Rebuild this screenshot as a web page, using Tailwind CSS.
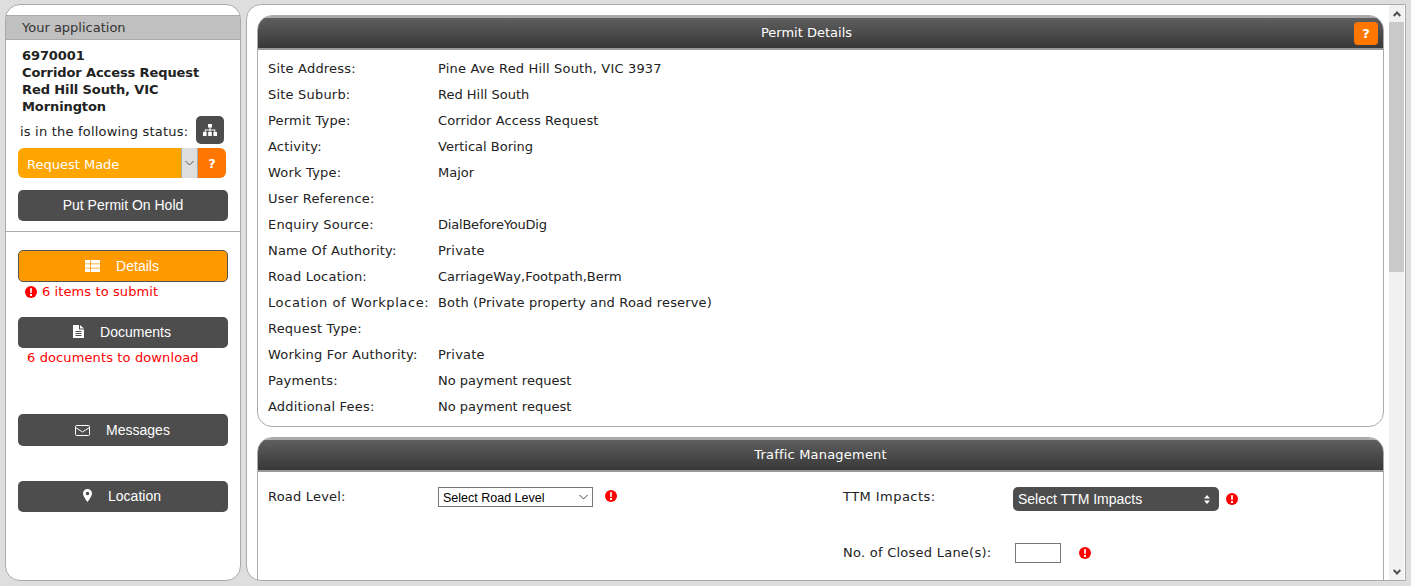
<!DOCTYPE html><html lang="en"><head>
<meta charset="UTF-8">
<title>Permit Details</title>
<meta name="viewport" content="width=device-width,initial-scale=1">
<script src="https://cdn.jsdelivr.net/npm/@tailwindcss/browser@4"></script>
</head><body class="h-screen overflow-hidden bg-[#dedede] font-['DejaVu_Sans',Verdana,sans-serif] text-[13px] text-[#222]">
<div class="flex h-[586px] gap-[5px] pt-1 pr-[5px] pb-[5px] pl-[5px]">

  <!-- sidebar -->
  <aside class="w-[236px] h-[577px] shrink-0 bg-white border border-[#aaa] rounded-[15px] pt-[10px]">
    <div class="h-[25px] bg-[#c0c0c0] border-y border-[#aaa] pl-4 leading-[23px] text-[#333]">Your application</div>
    <div class="pl-4 pt-[7px] font-bold leading-[17px] text-[#222] tracking-[-0.1px]">
      <p>6970001</p>
      <p>Corridor Access Request</p>
      <p>Red Hill South, VIC</p>
      <p>Mornington</p>
    </div>
    <div class="flex items-center h-[28px] mt-[1px] pl-[14px]">
      <span class="w-[176px] pt-1 tracking-[0.2px]">is in the following status:</span>
      <button class="w-[28px] h-[28px] bg-[#4d4d4d] rounded-[5px] flex items-center justify-center">
        <svg class="w-[14px] h-[12px]" viewBox="0 0 14 12" fill="#fff"><path d="M5 0h4v3.5H5zM0 8h3.6v4H0zM5.2 8h3.6v4H5.2zM10.4 8H14v4h-3.600zM6.500 3.500h1V5.500h4.800V8h-1V6.500h-3.800V8h-1V6.500H2.700V8h-1V5.500h4.800z"/></svg>
      </button>
    </div>
    <div class="flex h-[30px] mt-1 ml-3 w-[208px] rounded-[6px] overflow-hidden">
      <div class="w-[163px] bg-[#ffa500] text-white pl-[9px] leading-[34px]">Request Made</div>
      <div class="w-[17px] bg-[#dedede] border-x border-[#aaa] flex items-center justify-center">
        <svg class="w-[9px] h-[6px]" viewBox="0 0 9 6" fill="none" stroke="#555"><path d="M.5 1l4 4 4-4"/></svg>
      </div>
      <div class="w-[28px] bg-[#ff7700] text-white font-bold text-center leading-[32px]">?</div>
    </div>
    <button class="block w-[210px] h-[31px] mt-3 ml-3 pb-[2px] bg-[#4d4d4d] rounded-[5px] text-white font-['Liberation_Sans',Arial,sans-serif] text-sm">Put Permit On Hold</button>
    <div class="border-t border-[#aaa] mt-[10px]"></div>

    <button class="flex items-center justify-center w-[210px] h-[32px] mt-[18px] ml-3 pr-[2px] bg-[#ff9900] border border-[#555] rounded-[5px] text-white font-['Liberation_Sans',Arial,sans-serif] text-sm">
      <svg class="w-[15px] h-[12px] mr-[16px]" viewBox="0 0 15 12" fill="#fff"><path d="M0 0h5v3.400H0zM5.800 0H15v3.400H5.800zM0 4.300h5v3.400H0zM5.800 4.300H15v3.400H5.800zM0 8.600h5V12H0zM5.800 8.600H15V12H5.800z"/></svg>
      Details
    </button>
    <div class="flex items-center h-[18px] pt-[2px] ml-[19px] text-[#f00] tracking-[0.1px]">
      <svg class="w-[12px] h-[12px] mr-[5px]" viewBox="0 0 12 12"><circle cx="6" cy="6" r="6" fill="#f00"/><path d="M5 2.200h2l-.3 4.800H5.300zM5 8h2v2H5z" fill="#fff"/></svg>
      6 items to submit
    </div>

    <button class="flex items-center justify-center w-[210px] h-[31px] mt-[17px] ml-3 pr-[2px] pb-[2px] bg-[#4d4d4d] rounded-[5px] text-white font-['Liberation_Sans',Arial,sans-serif] text-sm">
      <svg class="w-[11px] h-[13px] mr-[16px]" viewBox="0 0 11 13" fill="#fff"><path d="M0 0h6v4.500h5V13H0zM7 0l4 3.500H7z"/><path d="M2.500 6.500h6M2.500 8.500h6M2.500 10.500h6" stroke="#4d4d4d"/></svg>
      Documents
    </button>
    <div class="h-[18px] ml-[21px] leading-[20px] text-[#f00] tracking-[0.12px]">6 documents to download</div>

    <button class="flex items-center justify-center w-[210px] h-[32px] mt-[48px] ml-3 pr-px bg-[#4d4d4d] rounded-[5px] text-white font-['Liberation_Sans',Arial,sans-serif] text-sm">
      <svg class="w-[15px] h-[11px] mr-[16px]" viewBox="0 0 15 11" fill="none" stroke="#fff"><rect x=".5" y=".5" width="14" height="10" rx="1"/><path d="M.5 2.500l7 4.500 7-4.500"/></svg>
      Messages
    </button>

    <button class="flex items-center justify-center w-[210px] h-[31px] mt-[35px] ml-3 pr-[2px] pb-[2px] bg-[#4d4d4d] rounded-[5px] text-white font-['Liberation_Sans',Arial,sans-serif] text-sm">
      <svg class="w-[9px] h-[13px] mr-[16px]" viewBox="0 0 9 13"><path fill="#fff" fill-rule="evenodd" d="M4.500 0A4.500 4.500 0 0 1 9 4.500c0 2-2.500 6-4.500 8.500C2.500 10.500 0 6.500 0 4.500A4.500 4.500 0 0 1 4.500 0zm0 2.700a1.800 1.800 0 1 0 0 3.600 1.800 1.800 0 0 0 0-3.600z"/></svg>
      Location
    </button>
  </aside>

  <!-- main -->
  <main class="relative flex-1 h-[577px] bg-white border border-[#aaa] rounded-l-[15px] overflow-hidden flex">
    <div class="flex-1 min-w-0 pt-[10px] pl-[10px] pr-[5px]">

      <section class="border border-[#aaa] rounded-[15px] h-[412px] overflow-hidden">
        <div class="relative h-[34px] pr-[28px] border-y-2 border-t-[#aaa] border-b-[#999] bg-linear-to-b from-[#5f5f5f] to-[#383838] text-white text-center leading-[30px]">
          Permit Details
          <span class="absolute right-[5px] top-[4px] w-6 h-[23px] bg-[#ff7700] rounded-[4px] font-bold leading-[23px]">?</span>
        </div>
        <dl class="pl-[10px] pt-[6px] tracking-[0.2px]">
          <div class="flex h-[26px] leading-[26px]"><dt class="w-[170px]">Site Address:</dt><dd class="tracking-[0.17px]">Pine Ave Red Hill South, VIC 3937</dd></div>
          <div class="flex h-[26px] leading-[26px]"><dt class="w-[170px]">Site Suburb:</dt><dd class="tracking-normal">Red Hill South</dd></div>
          <div class="flex h-[26px] leading-[26px]"><dt class="w-[170px]">Permit Type:</dt><dd class="tracking-[0.1px]">Corridor Access Request</dd></div>
          <div class="flex h-[26px] leading-[26px]"><dt class="w-[170px]">Activity:</dt><dd class="tracking-normal">Vertical Boring</dd></div>
          <div class="flex h-[26px] leading-[26px]"><dt class="w-[170px]">Work Type:</dt><dd class="tracking-normal">Major</dd></div>
          <div class="flex h-[26px] leading-[26px]"><dt class="w-[170px]">User Reference:</dt><dd></dd></div>
          <div class="flex h-[26px] leading-[26px]"><dt class="w-[170px]">Enquiry Source:</dt><dd class="tracking-[-0.2px]">DialBeforeYouDig</dd></div>
          <div class="flex h-[26px] leading-[26px]"><dt class="w-[170px]">Name Of Authority:</dt><dd>Private</dd></div>
          <div class="flex h-[26px] leading-[26px]"><dt class="w-[170px]">Road Location:</dt><dd class="tracking-normal">CarriageWay,Footpath,Berm</dd></div>
          <div class="flex h-[26px] leading-[26px]"><dt class="w-[170px] tracking-[0.6px]">Location of Workplace:</dt><dd class="tracking-[0.15px]">Both (Private property and Road reserve)</dd></div>
          <div class="flex h-[26px] leading-[26px]"><dt class="w-[170px]">Request Type:</dt><dd></dd></div>
          <div class="flex h-[26px] leading-[26px]"><dt class="w-[170px]">Working For Authority:</dt><dd>Private</dd></div>
          <div class="flex h-[26px] leading-[26px]"><dt class="w-[170px]">Payments:</dt><dd class="tracking-normal">No payment request</dd></div>
          <div class="flex h-[26px] leading-[26px]"><dt class="w-[170px]">Additional Fees:</dt><dd class="tracking-normal">No payment request</dd></div>
        </dl>
      </section>

      <section class="mt-[10px] border border-[#aaa] rounded-t-[15px] h-[200px] overflow-hidden">
        <div class="h-[34px] border-y-2 border-t-[#aaa] border-b-[#999] bg-linear-to-b from-[#5f5f5f] to-[#383838] text-white text-center leading-[30px] tracking-[0.2px]">Traffic Management</div>
        <div class="flex pl-[10px] pt-[15px] tracking-[0.2px]">
          <div class="flex w-[575px] items-start">
            <label class="w-[170px] leading-[20px]">Road Level:</label>
            <div class="relative">
              <select class="block appearance-none w-[155px] h-[20px] border border-[#777] bg-white text-black pl-1 pt-px font-['Liberation_Sans',Arial,sans-serif] text-[12.5px] tracking-normal"><option>Select Road Level</option></select>
              <svg class="absolute right-[5px] top-[7px] w-[9px] h-[6px]" viewBox="0 0 9 6" fill="none" stroke="#444"><path d="M.5 1l4 4 4-4"/></svg>
            </div>
            <svg class="w-[12px] h-[12px] ml-3 mt-[3px]" viewBox="0 0 12 12"><circle cx="6" cy="6" r="6" fill="#f00"/><path d="M5 2.200h2l-.3 4.800H5.300zM5 8h2v2H5z" fill="#fff"/></svg>
          </div>
          <div>
            <div class="flex items-start h-[56px]">
              <label class="w-[170px] leading-[20px] tracking-[0.45px]">TTM Impacts:</label>
              <div class="relative">
                <select class="block appearance-none w-[206px] h-[24px] rounded-[5px] bg-[#4d4d4d] text-white pl-[5px] font-['Liberation_Sans',Arial,sans-serif] text-sm tracking-normal"><option>Select TTM Impacts</option></select>
                <svg class="absolute right-[9px] top-[8px] w-[6px] h-[9px]" viewBox="0 0 6 9" fill="#fff"><path d="M3 0l3 3.500H0zM3 9L0 5.500h6z"/></svg>
              </div>
              <svg class="w-[12px] h-[12px] ml-[7px] mt-[6px]" viewBox="0 0 12 12"><circle cx="6" cy="6" r="6" fill="#f00"/><path d="M5 2.200h2l-.3 4.800H5.300zM5 8h2v2H5z" fill="#fff"/></svg>
            </div>
            <div class="flex items-start">
              <label class="w-[172px] leading-[20px] tracking-[0.25px]">No. of Closed Lane(s):</label>
              <input class="w-[46px] h-[20px] border border-[#777] bg-white">
              <svg class="w-[12px] h-[12px] ml-[18px] mt-1" viewBox="0 0 12 12"><circle cx="6" cy="6" r="6" fill="#f00"/><path d="M5 2.200h2l-.3 4.800H5.300zM5 8h2v2H5z" fill="#fff"/></svg>
            </div>
          </div>
        </div>
      </section>
    </div>

    <!-- scrollbar -->
    <div class="w-[15px] mr-px shrink-0 bg-[#f1f1f1] flex flex-col">
      <div class="h-[17px] flex items-center justify-center">
        <svg class="w-[8px] h-[6px]" viewBox="0 0 8 6" fill="none" stroke="#505050" stroke-width="2"><path d="M.7 5l3.300-3.500L7.300 5"/></svg>
      </div>
      <div class="h-[250px] bg-[#c9c9c9]"></div>
      <div class="flex-1"></div>
      <div class="h-[17px] flex items-center justify-center">
        <svg class="w-[8px] h-[6px]" viewBox="0 0 8 6" fill="none" stroke="#505050" stroke-width="2"><path d="M.7 1l3.300 3.500L7.300 1"/></svg>
      </div>
    </div>
  </main>
</div>
</body></html>
